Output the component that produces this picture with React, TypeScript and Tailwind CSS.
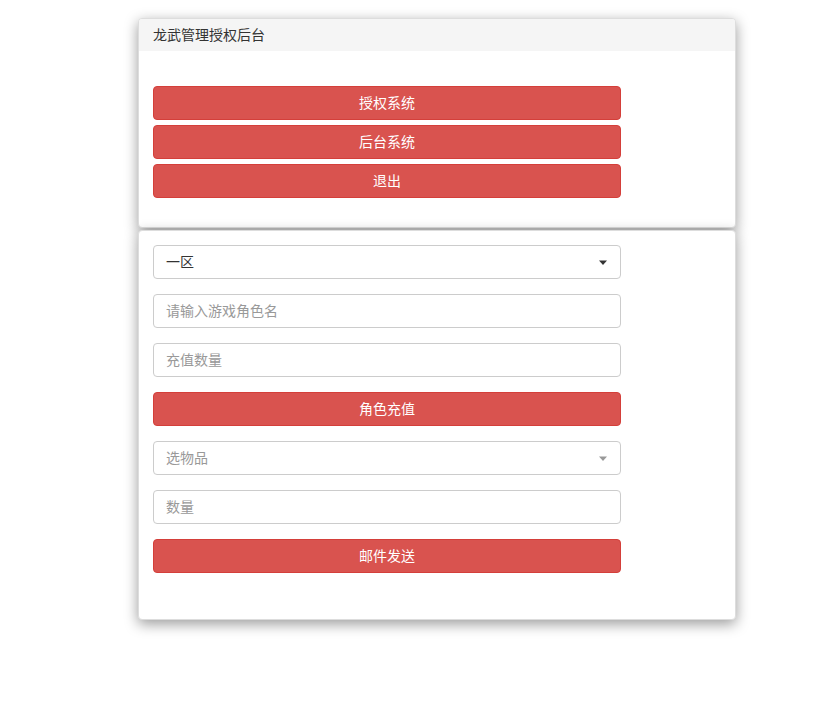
import React from 'react';

const font = "font-['Microsoft_YaHei','Noto_Sans_CJK_SC',sans-serif]";

const RedButton = ({ children }: { children: React.ReactNode }) => (
  <button className="h-[34px] w-full rounded-[4px] border border-[#d43f3a] bg-[#d9534f] pb-[2px] text-[14px] text-white">
    {children}
  </button>
);

const Caret = ({ color }: { color: string }) => (
  <svg width="10" height="6" viewBox="0 0 10 6" className="absolute right-[12px] top-[14px]">
    <path d="M1 0.5h8L5 5z" fill={color} />
  </svg>
);

const App: React.FC = () => {
  return (
    <div className={`min-h-[718px] w-full bg-white pt-[18px] ${font}`}>
      <div className="ml-[138px] w-[598px]">
        {/* top card */}
        <div className="overflow-hidden rounded-[4px] border border-[#ddd] bg-white shadow-[0_4px_14px_rgba(0,0,0,0.4)]">
          <div className="h-[32px] bg-[#f5f5f5] px-[14px] pb-[1px] text-[14px] leading-[31px] text-[#333]">
            龙武管理授权后台
          </div>
          <div className="flex w-[496px] flex-col gap-[5px] px-[14px] pb-[29px] pt-[35px]">
            <RedButton>授权系统</RedButton>
            <RedButton>后台系统</RedButton>
            <RedButton>退出</RedButton>
          </div>
        </div>

        {/* bottom card */}
        <div className="mt-[2px] rounded-[4px] border border-[#ddd] bg-white shadow-[0_4px_14px_rgba(0,0,0,0.4)]">
          <div className="flex w-[496px] flex-col gap-[15px] px-[14px] pb-[46px] pt-[14px]">
            <div className="relative h-[34px] rounded-[4px] border border-[#ccc] px-[12px] text-[14px] leading-[30px] text-[#333]">
              一区
              <Caret color="#333" />
            </div>
            <input
              className="h-[34px] rounded-[4px] border border-[#ccc] px-[12px] pb-[2px] text-[14px] text-[#555] outline-none placeholder:text-[#999]"
              placeholder="请输入游戏角色名"
            />
            <input
              className="h-[34px] rounded-[4px] border border-[#ccc] px-[12px] pb-[2px] text-[14px] text-[#555] outline-none placeholder:text-[#999]"
              placeholder="充值数量"
            />
            <RedButton>角色充值</RedButton>
            <div className="relative h-[34px] rounded-[4px] border border-[#ccc] px-[12px] text-[14px] leading-[30px] text-[#999]">
              选物品
              <Caret color="#999" />
            </div>
            <input
              className="h-[34px] rounded-[4px] border border-[#ccc] px-[12px] pb-[2px] text-[14px] text-[#555] outline-none placeholder:text-[#999]"
              placeholder="数量"
            />
            <RedButton>邮件发送</RedButton>
          </div>
        </div>
      </div>
    </div>
  );
};

export default App;
